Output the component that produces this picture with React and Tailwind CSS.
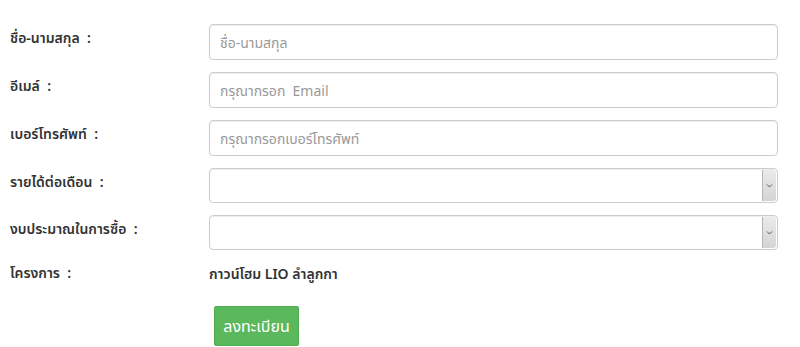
import React from 'react';

const FONT = "font-['Noto_Sans','Noto_Sans_Thai','Tahoma',sans-serif]";

function Label({ children, top = true }) {
  return (
    <div className={`w-[199px] shrink-0 text-[14px] leading-[20px] font-semibold text-[#333] ${top ? 'pt-[4px]' : ''}`}>
      {children}&nbsp; :
    </div>
  );
}

function TextField({ placeholder }) {
  return (
    <input
      placeholder={placeholder}
      className="flex-1 h-[36px] px-[10px] text-[14px] text-[#555] placeholder:text-[#999] bg-white border border-[#ccc] rounded-[4px] shadow-[inset_0_1px_1px_rgba(0,0,0,0.075)] outline-none"
    />
  );
}

function SelectField() {
  return (
    <div className="flex-1 h-[35px] flex bg-white border border-[#ccc] rounded-[4px] shadow-[inset_0_1px_1px_rgba(0,0,0,0.075)]">
      <div className="flex-1" />
      <div className="w-[14px] my-[1px] mr-[1px] flex items-center justify-center bg-gradient-to-b from-[#eaeaea] to-[#d4d4d4] border-l border-[#b5b5b5] rounded-r-[3px]">
        <svg width="7" height="5" viewBox="0 0 7 5" fill="none" stroke="#555" strokeWidth="1">
          <path d="M1 1.5 L3.5 4 L6 1.5" />
        </svg>
      </div>
    </div>
  );
}

export default function App() {
  const rows = [
    { label: 'ชื่อ-นามสกุล', type: 'text', ph: 'ชื่อ-นามสกุล' },
    { label: 'อีเมล์', type: 'text', ph: 'กรุณากรอก  Email' },
    { label: 'เบอร์โทรศัพท์', type: 'text', ph: 'กรุณากรอกเบอร์โทรศัพท์' },
    { label: 'รายได้ต่อเดือน', type: 'select' },
    { label: 'งบประมาณในการซื้อ', type: 'select' },
  ];

  return (
    <div className={`${FONT} bg-white w-[800px] h-[347px] pt-[24px] pl-[10px] pr-[22px]`}>
      <div className="flex flex-col gap-[12px]">
        {rows.map((r, i) => (
          <div key={i} className="flex items-start">
            <Label>{r.label}</Label>
            {r.type === 'text' ? <TextField placeholder={r.ph} /> : <SelectField />}
          </div>
        ))}
      </div>

      <div className="flex items-center mt-[13px] h-[20px]">
        <Label top={false}>โครงการ</Label>
        <div className="text-[14px] font-semibold text-[#333]">กาวน์โฮม LIO ลำลูกกา</div>
      </div>

      <div className="pl-[204px] mt-[23px]">
        <button className="h-[40px] w-[85px] bg-[#5cb85c] border border-[#4cae4c] text-white text-[16px] rounded-[2px]">
          ลงทะเบียน
        </button>
      </div>
    </div>
  );
}
